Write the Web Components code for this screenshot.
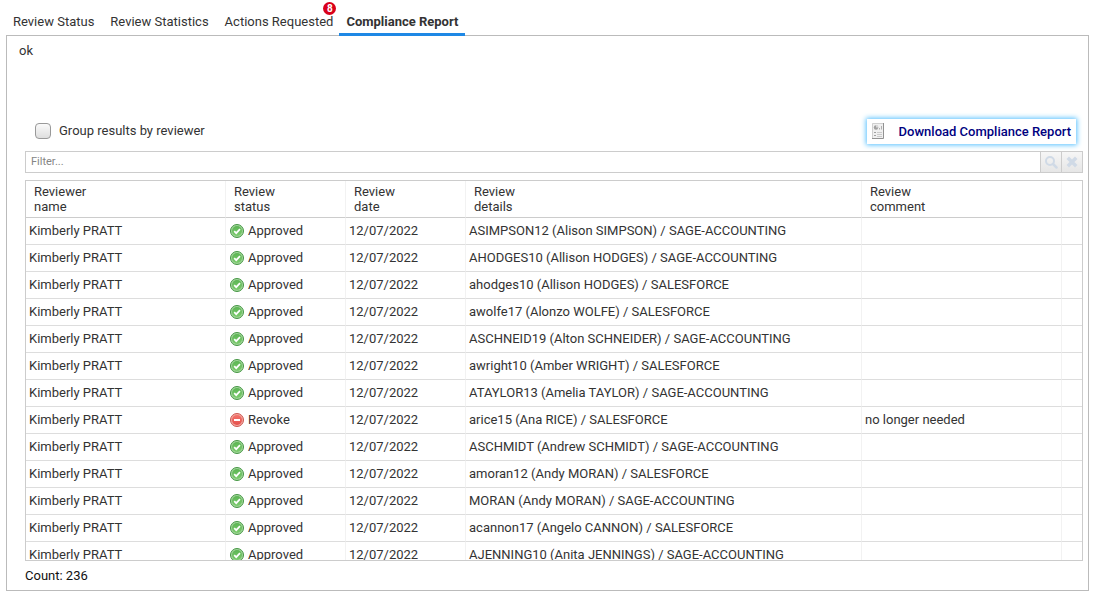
<!DOCTYPE html>
<html lang="en">
<head>
<meta charset="utf-8">
<title>Compliance Report</title>
<style>
html, body { height: 100%; }
body { margin: 0; background: #fff; color: #333; font: 13px/15px Roboto, "Liberation Sans", sans-serif; }
</style>
</head>
<body>
<review-page></review-page>

<template id="page-tpl">
<style>
:host { display: flex; flex-direction: column; box-sizing: border-box; height: 100vh; padding: 0 5px; }
main { flex: 1; min-height: 0; display: flex; flex-direction: column; border: 1px solid #bbb; margin-left: 1px; padding: 0 5px 0 18px; }
.message { margin: 7px 0 0 -6px; height: 76px; }
.tools { display: flex; justify-content: space-between; align-items: center; padding: 0 7px 0 8px; height: 25px; margin-bottom: 7px; }
data-grid { flex: 1; min-height: 0; margin-top: 7px; }
.count { margin: 7px 0; color: #111; }
</style>
<tab-strip>
  <tab-item>Review Status</tab-item>
  <tab-item>Review Statistics</tab-item>
  <tab-item badge="8">Actions Requested</tab-item>
  <tab-item selected>Compliance Report</tab-item>
</tab-strip>
<main>
  <p class="message">ok</p>
  <div class="tools">
    <check-option>Group results by reviewer</check-option>
    <report-button>Download Compliance Report</report-button>
  </div>
  <filter-bar></filter-bar>
  <data-grid></data-grid>
  <p class="count">Count: 236</p>
</main>
</template>

<script>
const define = (name, html, setup) => customElements.define(name, class extends HTMLElement {
  constructor() {
    super();
    this.attachShadow({ mode: 'open' }).innerHTML = html;
  }
  connectedCallback() { if (setup) setup(this, this.shadowRoot); }
});

define('tab-strip', `
<style>
:host { display: flex; height: 35px; }
</style><slot></slot>`);

define('tab-item', `
<style>
:host { display: block; }
button { position: relative; height: 36px; box-sizing: border-box; border: 0; border-bottom: 3px solid transparent; background: none; margin: 0; padding: 10px 8px 0; font: inherit; color: inherit; white-space: nowrap; cursor: pointer; }
:host([badge]) button { padding-right: 6px; }
:host([selected]) button { font-weight: 700; border-color: #1e88e5; padding-left: 7px; padding-right: 7px; }
.badge { position: absolute; top: 2px; right: 3px; width: 13px; height: 13px; border-radius: 50%; background: #d9001b; color: #fff; font-size: 10px; line-height: 13px; font-weight: 700; text-align: center; }
.badge:empty { display: none; }
</style>
<button type="button" role="tab"><slot></slot><span class="badge"></span></button>`,
(el, root) => {
  root.querySelector('.badge').textContent = el.getAttribute('badge') || '';
  root.querySelector('button').setAttribute('aria-selected', el.hasAttribute('selected'));
});

define('check-option', `
<style>
:host { display: block; }
label { display: flex; align-items: center; gap: 8px; padding: 0 2px 2px; }
input { appearance: none; box-sizing: border-box; width: 16px; height: 16px; margin: 0; border: 1px solid #999; border-radius: 4px; background: linear-gradient(#fafafa, #dedede); }
input:checked { background: #1e88e5; }
</style>
<label><input type="checkbox"><slot></slot></label>`);

define('report-button', `
<style>
:host { display: block; }
button { display: flex; align-items: center; gap: 14px; height: 25px; border: 0; background: #fff; margin: 0; padding: 0 5px; font: inherit; font-weight: 500; color: #000080; box-shadow: 0 0 5px 1px #56c0ff; cursor: pointer; }
svg { display: block; width: 13px; height: 17px; }
</style>
<button type="button">
<svg viewBox="0 0 13 17" aria-hidden="true"><path d="M0 0h12v16H0z" fill="#f0f0f0"/><path d="M.5 15.500V.5H12" fill="none" stroke="#d0d0d0"/><path d="M11.500 0v15.500H0" fill="none" stroke="#929292"/><circle cx="4" cy="4.500" r="2.200" fill="#a0a0a0"/><path d="M4 4.500V2A2.500 2.500 0 0 1 6.500 4.500z" fill="#d8d8d8"/><path d="M7.500 6.500V5M9.500 6.500V3" stroke="#b0b0b0"/><path d="M2 9.500h2M2 12.500h2" stroke="#a0a0a0"/><path d="M5 9.500h5M5 11.500h5M5 13.500h5" stroke="#cacaca"/></svg>
<span><slot></slot></span></button>`);

define('filter-bar', `
<style>
:host { display: flex; height: 20px; border: 1px solid #ccc; }
input { flex: 1; min-width: 0; border: 0; margin: 0; padding: 0 5px 2px; outline: 0; font: inherit; font-size: 11px; color: #333; background: #fff; }
input::placeholder { color: #858585; opacity: 1; }
button { box-sizing: border-box; width: 21px; padding: 0; margin: 0; border: 0; border-left: 1px solid #ccc; background: linear-gradient(#f6f6f6, #e6e6e6); display: grid; place-items: center; }
svg { width: 14px; height: 14px; display: block; }
</style>
<input type="text" placeholder="Filter..." aria-label="Filter">
<button type="button" aria-label="Search"><svg viewBox="0 0 14 14" fill="none" stroke="#d0dae6"><circle cx="6" cy="6" r="4" stroke-width="2"/><path d="M9 9l3.500 3.500" stroke-width="2.500" stroke-linecap="round"/></svg></button>
<button type="button" aria-label="Clear"><svg viewBox="0 0 14 14" fill="none" stroke="#d0dae6"><path d="M4 4l6 6M10 4l-6 6" stroke-width="3.500" stroke-linecap="square"/></svg></button>`);

define('status-label', `
<style>
:host { display: flex; align-items: center; gap: 4px; }
svg { width: 14px; height: 14px; display: block; }
span { padding-bottom: 2px; }
:host([kind="Revoke"]) .ok, :host([kind="Approved"]) .no { display: none; }
</style>
<svg class="ok" viewBox="0 0 14 14" aria-hidden="true"><defs><linearGradient id="g" x2="0" y2="1"><stop stop-color="#5cb554"/><stop offset="1" stop-color="#7bcb6d"/></linearGradient></defs><circle cx="7" cy="7" r="6.500" fill="#a4d69c" stroke="#449643"/><circle cx="7" cy="7" r="5" fill="url(#g)"/><path d="M4.200 7.200l2 2 3.800-4" fill="none" stroke="#fff" stroke-width="1.700"/></svg>
<svg class="no" viewBox="0 0 14 14" aria-hidden="true"><defs><linearGradient id="r" x2="0" y2="1"><stop stop-color="#f4726b"/><stop offset="1" stop-color="#e5504c"/></linearGradient></defs><circle cx="7" cy="7" r="6.500" fill="#f2a69e" stroke="#cb5650"/><circle cx="7" cy="7" r="5" fill="url(#r)"/><path d="M4 7h6" stroke="#fff" stroke-width="2"/></svg>
<span><slot></slot></span>`);

const details = [
  'ASIMPSON12 (Alison SIMPSON) / SAGE-ACCOUNTING',
  'AHODGES10 (Allison HODGES) / SAGE-ACCOUNTING',
  'ahodges10 (Allison HODGES) / SALESFORCE',
  'awolfe17 (Alonzo WOLFE) / SALESFORCE',
  'ASCHNEID19 (Alton SCHNEIDER) / SAGE-ACCOUNTING',
  'awright10 (Amber WRIGHT) / SALESFORCE',
  'ATAYLOR13 (Amelia TAYLOR) / SAGE-ACCOUNTING',
  'arice15 (Ana RICE) / SALESFORCE',
  'ASCHMIDT (Andrew SCHMIDT) / SAGE-ACCOUNTING',
  'amoran12 (Andy MORAN) / SALESFORCE',
  'MORAN (Andy MORAN) / SAGE-ACCOUNTING',
  'acannon17 (Angelo CANNON) / SALESFORCE',
  'AJENNING10 (Anita JENNINGS) / SAGE-ACCOUNTING'
];
const comments = { 7: 'no longer needed' };

define('data-grid', `
<style>
:host { display: block; border: 1px solid #ccc; overflow: hidden; }
table { width: 100%; table-layout: fixed; border-collapse: separate; border-spacing: 0; }
.name, .comment { width: 200px; }
.status, .date { width: 120px; }
.end { width: 20px; }
th, td { box-sizing: border-box; text-align: left; border-right: 1px solid #f2f2f2; border-bottom: 1px solid #ddd; }
th { height: 37px; padding: 3px 8px; font-weight: 400; border-bottom-color: #ccc; vertical-align: top; }
td { height: 27px; padding: 0 3px 2px; white-space: nowrap; }
td.state { padding: 0 4px; }
th:last-child, td:last-child { border-right: 0; padding: 0; }
</style>
<table>
<colgroup><col class="name"><col class="status"><col class="date"><col><col class="comment"><col class="end"></colgroup>
<thead><tr><th>Reviewer<br>name</th><th>Review<br>status</th><th>Review<br>date</th><th>Review<br>details</th><th>Review<br>comment</th><th></th></tr></thead>
<tbody></tbody>
</table>`,
(el, root) => {
  root.querySelector('tbody').innerHTML = details.map((text, i) => {
    const status = comments[i] ? 'Revoke' : 'Approved';
    return `<tr><td>Kimberly PRATT</td><td class="state"><status-label kind="${status}">${status}</status-label></td><td>12/07/2022</td><td>${text}</td><td>${comments[i] || ''}</td><td></td></tr>`;
  }).join('');
});

customElements.define('review-page', class extends HTMLElement {
  constructor() {
    super();
    this.attachShadow({ mode: 'open' }).append(document.getElementById('page-tpl').content.cloneNode(true));
  }
});
</script>
</body>
</html>
